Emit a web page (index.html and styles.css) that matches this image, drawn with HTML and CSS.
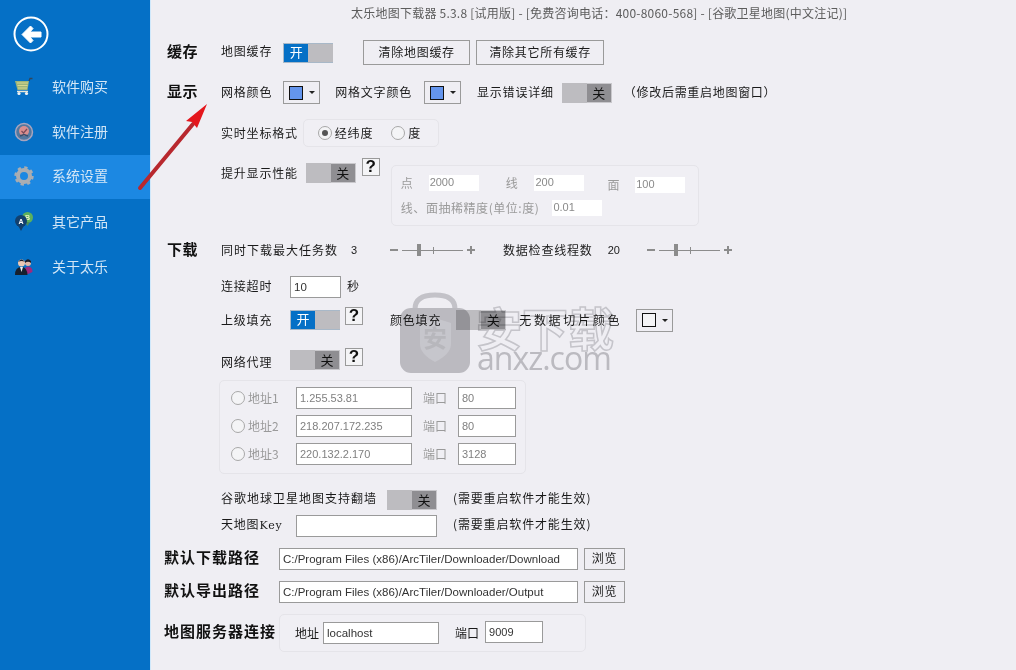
FILE: index.html
```html
<!DOCTYPE html>
<html lang="zh-CN">
<head>
    <meta charset="UTF-8">
    <title>太乐地图下载器</title>
    <link rel="stylesheet" href="styles.css">
</head>
<body>
    <div class="app">
        <aside class="sidebar">
            <div class="back">
                <svg width="36" height="36" viewBox="0 0 36 36">
                    <circle cx="18" cy="18" r="16.5" fill="none" stroke="#fff" stroke-width="2"/>
                    <path d="M9 18.500 L17.500 10 L20 12.500 L17 16 H28 V21 H17 L20 24.500 L17.500 27 Z" fill="#fff" stroke="#fff" stroke-linejoin="round"/>
                </svg>
            </div>
            <div class="nav-item">
                <svg class="nav-icon" width="20" height="20" viewBox="0 0 20 20">
                    <path d="M1 4 H15 L13.5 13 H3.5 Z" fill="#9db47a"/>
                    <path d="M3 6 H14 M3.5 8.5 H13.5 M4 11 H13" stroke="#d8d88e" stroke-width="1"/>
                    <path d="M15 4 L16 1.5 H18.500" stroke="#32465c" stroke-width="1.300" fill="none"/>
                    <path d="M3 14.500 H14" stroke="#e8e8d8" stroke-width="1.500"/>
                    <circle cx="5" cy="16.500" r="1.600" fill="#f2f2f2"/>
                    <circle cx="12.500" cy="16.500" r="1.600" fill="#f2f2f2"/>
                </svg>
                <span>软件购买</span>
            </div>
            <div class="nav-item">
                <svg class="nav-icon" width="20" height="20" viewBox="0 0 20 20">
                    <circle cx="10" cy="10" r="8.500" fill="#52789f" stroke="#a9a4bd" stroke-width="1.500"/>
                    <circle cx="10" cy="9" r="5" fill="#d98f8f"/>
                    <path d="M7.500 9 L9.500 11 L13 7" stroke="#7a4a5a" stroke-width="1.200" fill="none"/>
                    <path d="M6 14 L10 12.500 L14 14" stroke="#36506e" stroke-width="1.500" fill="none"/>
                </svg>
                <span>软件注册</span>
            </div>
            <div class="nav-item active">
                <svg class="nav-icon" width="20" height="20" viewBox="0 0 20 20">
                    <circle cx="10" cy="10" r="6" fill="none" stroke="#a9adb2" stroke-width="4"/>
                    <circle cx="10" cy="10" r="8.500" fill="none" stroke="#a9adb2" stroke-width="2.400" stroke-dasharray="3.300 3.370"/>
                </svg>
                <span>系统设置</span>
            </div>
            <div class="nav-item">
                <svg class="nav-icon" width="20" height="22" viewBox="0 0 20 22">
                    <circle cx="13.500" cy="6.500" r="5.500" fill="#5cb05c"/>
                    <path d="M11 11 L13.500 15 L16 11 Z" fill="#4a8f5a"/>
                    <text x="13.500" y="9" class="pin-text" fill="#e8f0c0">B</text>
                    <circle cx="7" cy="10" r="6" fill="#12406e"/>
                    <path d="M4 14.500 L7 20 L10 14.500 Z" fill="#12406e"/>
                    <text x="7" y="12.500" class="pin-text" fill="#fff">A</text>
                </svg>
                <span>其它产品</span>
            </div>
            <div class="nav-item">
                <svg class="nav-icon" width="20" height="20" viewBox="0 0 20 20">
                    <circle cx="14" cy="6" r="3" fill="#e2b8a8"/>
                    <path d="M10 16 Q10 9.500 14 9.500 Q18.500 9.500 18.500 15 L14 17 Z" fill="#a02a7e"/>
                    <path d="M11 4 Q14 0.500 17 4 L17 6 Q14 3.500 11 6 Z" fill="#1c1c28"/>
                    <circle cx="7.500" cy="6" r="3.500" fill="#ecc8b4"/>
                    <path d="M4 5 Q7.500 0 11 5 Q7.500 3 4 5 Z" fill="#1c1c28"/>
                    <path d="M1 18 Q1 10 7.500 10 Q13 10 13.500 18 Z" fill="#16202e"/>
                    <path d="M6 10 H9 L7.500 15 Z" fill="#f0f0f0"/>
                </svg>
                <span>关于太乐</span>
            </div>
        </aside>

        <main class="content">
            <div class="title">太乐地图下载器 5.3.8 [试用版] - [免费咨询电话：400-8060-568] - [谷歌卫星地图(中文注记)]</div>

            <div class="row row-cache">
                <div class="sec">缓存</div>
                <span class="lbl">地图缓存</span>
                <div class="toggle on ml11"><b>开</b></div>
                <button class="btn btn-a ml30">清除地图缓存</button>
                <button class="btn btn-b ml6">清除其它所有缓存</button>
            </div>

            <div class="row row-display">
                <div class="sec">显示</div>
                <span class="lbl">网格颜色</span>
                <div class="color ml11"><i class="blue"></i><u></u></div>
                <span class="lbl ml15">网格文字颜色</span>
                <div class="color ml12"><i class="blue"></i><u></u></div>
                <span class="lbl ml16">显示错误详细</span>
                <div class="toggle ml8"><b>关</b></div>
                <span class="lbl hint ml12">（修改后需重启地图窗口）</span>
            </div>

            <div class="row row-coord">
                <span class="lbl indent">实时坐标格式</span>
                <div class="group coord-group ml5">
                    <span class="radio checked"></span>
                    <span class="lbl">经纬度</span>
                    <span class="radio ml18"></span>
                    <span class="lbl">度</span>
                </div>
            </div>

            <div class="row row-perf">
                <span class="lbl indent perf-lbl">提升显示性能</span>
                <div class="toggle ml8 perf-toggle"><b>关</b></div>
                <div class="help ml6">?</div>
                <div class="group perf-group ml11">
                    <div class="perf-line">
                        <span class="lbl dim">点</span>
                        <span class="plain ml15">2000</span>
                        <span class="lbl dim ml27">线</span>
                        <span class="plain ml16">200</span>
                        <span class="lbl dim ml23 nudge">面</span>
                        <span class="plain ml15 nudge">100</span>
                    </div>
                    <div class="perf-line second">
                        <span class="lbl dim tight">线、面抽稀精度(单位:度)</span>
                        <span class="plain ml13">0.01</span>
                    </div>
                </div>
            </div>

            <div class="row row-download">
                <div class="sec">下载</div>
                <span class="lbl wide">同时下载最大任务数</span>
                <span class="num num-a">3</span>
                <div class="slider"><em class="minus"></em><span class="track"><s></s><q></q></span><em class="plus"></em></div>
                <span class="lbl ml27">数据检查线程数</span>
                <span class="num num-b">20</span>
                <div class="slider"><em class="minus"></em><span class="track"><s></s><q></q></span><em class="plus"></em></div>
            </div>

            <div class="row row-timeout">
                <span class="lbl indent w69">连接超时</span>
                <input class="field w51" value="10">
                <span class="lbl ml6">秒</span>
            </div>

            <div class="row row-fill">
                <span class="lbl indent w69">上级填充</span>
                <div class="toggle on"><b>开</b></div>
                <div class="help ml5 top">?</div>
                <span class="lbl ml27">颜色填充</span>
                <div class="toggle ml15"><b>关</b></div>
                <span class="lbl spread ml13">无数据切片颜色</span>
                <div class="color ml14"><i class="white"></i><u></u></div>
            </div>

            <div class="row row-proxy">
                <span class="lbl indent w69">网络代理</span>
                <div class="toggle"><b>关</b></div>
                <div class="help ml5 top">?</div>
            </div>

            <div class="group proxy-group">
                <div class="proxy-line">
                    <span class="radio"></span>
                    <span class="lbl dim addr">地址1</span>
                    <input class="field w116 soft" value="1.255.53.81">
                    <span class="lbl dim port">端口</span>
                    <input class="field w58 soft" value="80">
                </div>
                <div class="proxy-line">
                    <span class="radio"></span>
                    <span class="lbl dim addr">地址2</span>
                    <input class="field w116 soft" value="218.207.172.235">
                    <span class="lbl dim port">端口</span>
                    <input class="field w58 soft" value="80">
                </div>
                <div class="proxy-line">
                    <span class="radio"></span>
                    <span class="lbl dim addr">地址3</span>
                    <input class="field w116 soft" value="220.132.2.170">
                    <span class="lbl dim port">端口</span>
                    <input class="field w58 soft" value="3128">
                </div>
            </div>

            <div class="row row-google">
                <span class="lbl wide indent">谷歌地球卫星地图支持翻墙</span>
                <div class="toggle ml10"><b>关</b></div>
                <span class="lbl ml16 note">(需要重启软件才能生效)</span>
            </div>

            <div class="row row-key">
                <span class="lbl indent key-lbl">天地图<tt>Key</tt></span>
                <input class="field w141">
                <span class="lbl ml16 note">(需要重启软件才能生效)</span>
            </div>

            <div class="row row-path">
                <div class="big w115">默认下载路径</div>
                <input class="field w299" value="C:/Program Files (x86)/ArcTiler/Downloader/Download">
                <button class="btn btn-c ml6">浏览</button>
            </div>

            <div class="row row-path">
                <div class="big w115">默认导出路径</div>
                <input class="field w299" value="C:/Program Files (x86)/ArcTiler/Downloader/Output">
                <button class="btn btn-c ml6">浏览</button>
            </div>

            <div class="row row-server">
                <div class="big w115">地图服务器连接</div>
                <div class="group server-group">
                    <span class="lbl">地址</span>
                    <input class="field w116 ml4" value="localhost">
                    <span class="lbl ml16">端口</span>
                    <input class="field w58 ml6 up small" value="9009">
                </div>
            </div>
        </main>

        <div class="watermark">
            <svg class="wm-lock" width="72" height="82" viewBox="0 0 72 82">
                <path d="M16 20 V17 Q16 3 36 3 Q56 3 56 17 V20" fill="none" stroke="#d0d0d2" stroke-width="5"/>
                <rect x="1" y="16" width="70" height="65" rx="11" fill="#c8c8ca"/>
                <path d="M21 31 L36 26 L52 31 V52 Q52 62 36 70 Q21 62 21 52 Z" fill="#d4d4d6"/>
                <text x="36" y="55" class="wm-glyph">安</text>
            </svg>
            <div class="wm-cn">安下载</div>
            <div class="wm-en">anxz.com</div>
        </div>

        <svg class="arrow" width="90" height="100" viewBox="0 0 90 100">
            <path d="M5 90 L58 26" stroke="#b8282e" stroke-width="4" stroke-linecap="round"/>
            <path d="M72 6 L62 30 L57 24 L51 23 Z" fill="#e4161c"/>
        </svg>
    </div>
</body>
</html>
```

FILE: styles.css
```css
* {
    box-sizing: border-box;
}

html, body {
    margin: 0;
    padding: 0;
    height: 100%;
    overflow: hidden;
}

body {
    font-family: "Noto Sans CJK SC", "Liberation Sans", sans-serif;
    font-size: 12px;
    color: #1a1a1a;
    background: #efeef3;
}

.app {
    position: relative;
    display: flex;
    width: 1016px;
    height: 670px;
}

/* left menu */
.sidebar {
    width: 151px;
    flex-shrink: 0;
    background: #0570c6;
    border-right: 1px solid #cfe8fb;
}

.back {
    height: 65px;
    padding: 16px 0 0 13px;
}

.nav-item {
    display: flex;
    align-items: center;
    height: 45px;
    padding-left: 14px;
    color: #d3e6f6;
    font-size: 14px;
}

.nav-item span {
    padding-bottom: 4px;
}

.nav-item.active {
    height: 44px;
    margin-bottom: 1px;
    background: #1c88e2;
}

.nav-icon {
    width: 20px;
    margin: 0 18px 2px 0;
}

.pin-text {
    font: bold 7px "Liberation Sans", sans-serif;
    text-anchor: middle;
}

/* settings */
.content {
    flex: 1;
    display: flex;
    flex-direction: column;
    padding: 5px 0 0 13px;
}

.title {
    height: 16px;
    padding-left: 187px;
    color: #5c5c5c;
    font-size: 12px;
    letter-spacing: 0.23px;
    line-height: 16px;
    white-space: nowrap;
}

.row {
    display: flex;
    align-items: center;
}

.row-cache { height: 25px; margin-top: 19px; }
.row-display { height: 23px; margin-top: 16px; }
.row-coord { height: 28px; margin-top: 15px; }
.row-perf { height: 67px; margin-top: 11px; align-items: flex-start; }
.row-download { height: 20px; margin-top: 15px; }
.row-timeout { height: 22px; margin-top: 16px; }
.row-fill { height: 26px; margin-top: 9px; }
.row-proxy { height: 24px; margin-top: 15px; }
.row-google { height: 20px; margin-top: 16px; }
.row-key { height: 22px; margin-top: 5px; }
.row-path { height: 22px; margin-top: 11px; }
.row-server { height: 38px; margin-top: 11px; }

.sec {
    width: 54px;
    margin-left: 3px;
    padding-bottom: 4px;
    font-size: 15px;
    font-weight: 700;
    letter-spacing: 0.6px;
    color: #111;
}

.big {
    padding-bottom: 6px;
    font-size: 15px;
    font-weight: 700;
    letter-spacing: 1px;
    color: #111;
    white-space: nowrap;
}

.w115 { width: 115px; }

.lbl {
    padding-bottom: 2px;
    letter-spacing: 0.8px;
    white-space: nowrap;
}

.row-cache .lbl,
.row-timeout .lbl { padding-bottom: 4px; }
.row-proxy .lbl { padding: 2px 0 0; }
.row-google .lbl,
.row-key .lbl { padding-bottom: 6px; }

.indent { margin-left: 57px; }
.w69 { width: 69px; }
.dim { color: #9a9a9a; }
.wide { letter-spacing: 1px; }
.tight { letter-spacing: 0.55px; }
.hint { letter-spacing: 0.7px; }
.note { letter-spacing: 0.85px; }
.spread { letter-spacing: 2.7px; }
.key-lbl { width: 75px; }
.key-lbl tt { font: 11px "DejaVu Serif", serif; }

.ml4 { margin-left: 4px; }
.ml5 { margin-left: 5px; }
.ml6 { margin-left: 6px; }
.ml8 { margin-left: 8px; }
.ml10 { margin-left: 10px; }
.ml11 { margin-left: 11px; }
.ml12 { margin-left: 12px; }
.ml13 { margin-left: 13px; }
.ml14 { margin-left: 14px; }
.ml15 { margin-left: 15px; }
.ml16 { margin-left: 16px; }
.ml18 { margin-left: 18px; }
.ml23 { margin-left: 23px; }
.ml27 { margin-left: 27px; }
.ml30 { margin-left: 30px; }

.toggle {
    display: flex;
    justify-content: flex-end;
    width: 50px;
    height: 20px;
    flex-shrink: 0;
    background: #bdbcc0;
}

.toggle b {
    width: 25px;
    height: 20px;
    background: #8f8e92;
    border: 1px solid #c9c8cc;
    border-left: none;
    color: #111;
    font-weight: 400;
    font-size: 13px;
    line-height: 17px;
    text-align: center;
}

.toggle.on {
    justify-content: flex-start;
    border: 1px solid #a8b8c8;
    border-right: none;
}

.toggle.on b {
    width: 24px;
    height: 18px;
    background: #0570c6;
    border: none;
    color: #fff;
    line-height: 16px;
}

.btn {
    display: block;
    height: 25px;
    padding: 0 0 3px;
    background: #efeef3;
    border: 1px solid #9a9a9a;
    font: inherit;
    letter-spacing: 0.7px;
    color: #1a1a1a;
}

.btn-a { width: 107px; }
.btn-b { width: 128px; }
.btn-c { width: 41px; height: 22px; padding-bottom: 4px; }

.color {
    display: flex;
    align-items: center;
    width: 37px;
    height: 23px;
    flex-shrink: 0;
    padding-left: 5px;
    border: 1px solid #9a9a9a;
}

.color i {
    display: block;
    width: 14px;
    height: 14px;
    border: 1px solid #111;
}

.color .blue { background: #6495ed; }
.color .white { background: #f4f4f6; }

.color u {
    width: 0;
    height: 0;
    margin-left: 6px;
    border: 3px solid transparent;
    border-top: 3px solid #222;
    border-bottom: none;
}

.group {
    background: #f0eff4;
    border: 1px solid #e5e4e9;
    border-radius: 5px;
}

.coord-group {
    display: flex;
    align-items: center;
    width: 136px;
    height: 28px;
    padding-left: 14px;
}

.radio {
    display: block;
    position: relative;
    width: 14px;
    height: 14px;
    flex-shrink: 0;
    margin-right: 3px;
    background: #f4f4f6;
    border: 1px solid #a8a8a8;
    border-radius: 50%;
}

.radio.checked::after {
    content: "";
    position: absolute;
    left: 3px;
    top: 3px;
    width: 6px;
    height: 6px;
    background: #555;
    border-radius: 50%;
}

.perf-lbl { margin-top: 6px; }
.perf-toggle { margin-top: 5px; }

.help {
    width: 18px;
    height: 18px;
    flex-shrink: 0;
    border: 1px solid #9a9a9a;
    background: #f4f4f6;
    color: #111;
    font: 700 17px/16px "Liberation Sans", sans-serif;
    text-align: center;
}

.help.top {
    align-self: flex-start;
}

.perf-group {
    width: 308px;
    height: 61px;
    margin-top: 7px;
    padding: 9px 0 0 9px;
}

.perf-line {
    display: flex;
    align-items: flex-start;
    height: 16px;
}

.perf-line.second {
    margin-top: 9px;
}

.plain {
    display: block;
    width: 50px;
    height: 16px;
    padding-left: 1px;
    background: #fff;
    color: #8a8a8a;
    font: 11px/15px "Liberation Sans", sans-serif;
}

.perf-line .lbl { line-height: 16px; }
.nudge { margin-top: 2px; }

.num {
    font: 11px "Liberation Sans", sans-serif;
}

.num-a { width: 39px; margin-left: 13px; }
.num-b { width: 39px; margin-left: 15px; }

.slider {
    display: flex;
    align-items: center;
    width: 86px;
}

.slider em {
    position: relative;
    display: block;
    width: 8px;
    height: 2px;
    background: #8c8c8c;
}

.slider .plus::after {
    content: "";
    position: absolute;
    left: 3px;
    top: -3px;
    width: 2px;
    height: 8px;
    background: #8c8c8c;
}

.track {
    position: relative;
    display: block;
    width: 61px;
    height: 1px;
    margin: 0 4px;
    background: #8c8c8c;
}

.track s {
    position: absolute;
    left: 15px;
    top: -6px;
    width: 4px;
    height: 12px;
    background: #8c8c8c;
}

.track q {
    position: absolute;
    left: 31px;
    top: -3px;
    width: 1px;
    height: 7px;
    background: #8c8c8c;
    quotes: none;
}

.field {
    display: block;
    height: 22px;
    flex-shrink: 0;
    padding: 0 0 1px 3px;
    background: #fff;
    border: 1px solid #9a9a9a;
    border-radius: 0;
    outline: none;
    color: #333;
    font: 11.5px "Liberation Sans", sans-serif;
}

.field.soft { padding-bottom: 0; color: #808080; font-size: 11px; }
.field.small { font-size: 11px; }
.up { margin-top: -2px; }

.w51 { width: 51px; }
.w58 { width: 58px; }
.w116 { width: 116px; }
.w141 { width: 141px; }
.w299 { width: 299px; }

.proxy-group {
    width: 307px;
    height: 94px;
    margin: 8px 0 0 55px;
    padding: 6px 0 0 11px;
}

.proxy-line {
    display: flex;
    align-items: center;
    height: 22px;
    margin-bottom: 6px;
}

.addr { width: 48px; letter-spacing: 0; }
.port { width: 35px; margin-left: 11px; letter-spacing: 0; }

.server-group {
    display: flex;
    align-items: center;
    width: 307px;
    height: 38px;
    padding-left: 15px;
}

.row-server .lbl { letter-spacing: 0; }

/* things lying over the form */
.watermark {
    position: absolute;
    left: 399px;
    top: 292px;
    width: 220px;
    height: 88px;
    mix-blend-mode: multiply;
    pointer-events: none;
}

.wm-lock {
    position: absolute;
    left: 0;
    top: 0;
}

.wm-glyph {
    font: 700 24px "Noto Sans CJK SC", sans-serif;
    fill: #c4c4c6;
    text-anchor: middle;
}

.wm-cn {
    position: absolute;
    left: 77px;
    top: 4px;
    font-size: 46px;
    font-weight: 700;
    line-height: 60px;
    color: transparent;
    -webkit-text-stroke: 1.5px #d2d2d4;
    white-space: nowrap;
}

.wm-en {
    position: absolute;
    left: 78px;
    top: 46px;
    color: #c8c8ca;
    font: 32px/40px "Open Sans", sans-serif;
    letter-spacing: -1px;
    white-space: nowrap;
}

.arrow {
    position: absolute;
    left: 135px;
    top: 98px;
    pointer-events: none;
}
```
